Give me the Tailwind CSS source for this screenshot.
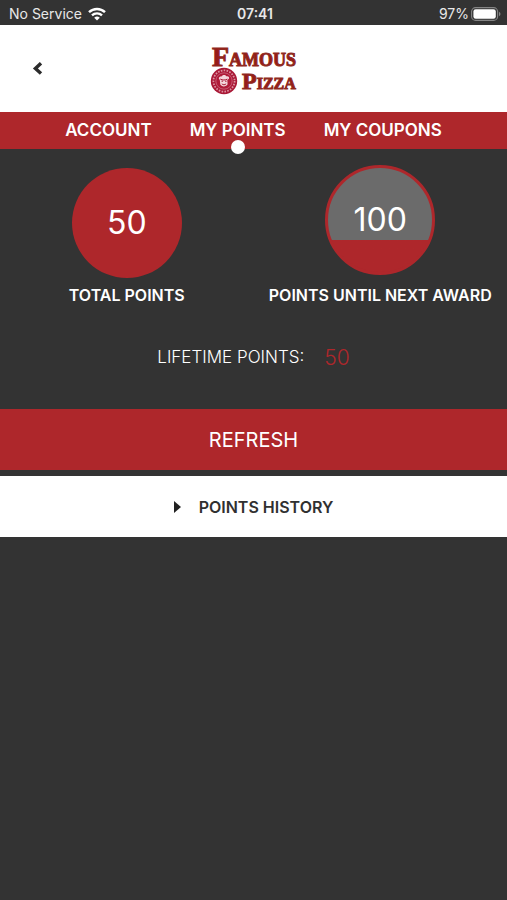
<!DOCTYPE html>
<html lang="en">
<head>
<meta charset="utf-8">
<meta name="viewport" content="width=device-width, initial-scale=1">
<title>Famous Pizza - My Points</title>
<script src="https://cdn.jsdelivr.net/npm/@tailwindcss/browser@4"></script>
</head>
<body class="min-h-screen bg-[#333333] font-['Inter',sans-serif] text-white">
<div class="grid h-[25px] grid-cols-3 items-center pt-[2px] pr-[6px] pl-[9px] text-[14px] text-[#e8e8e8]">
  <div class="flex items-center gap-[6px]">
    <span>No Service</span>
    <svg class="h-[14px] w-[18px]" viewBox="0 0 18 14" fill="none" stroke="#fff" stroke-width="2.4" aria-label="Wi-Fi" role="img">
      <path d="M1 5.2a11.5 11.5 0 0 1 16 0M4 8.4a7.2 7.2 0 0 1 10 0"/>
      <path d="M9 13.6 6.2 10.8a4 4 0 0 1 5.6 0Z" fill="#fff" stroke="none"/>
    </svg>
  </div>
  <time class="text-center font-semibold">07:41</time>
  <div class="flex items-center justify-end gap-[2px]">
    <span>97%</span>
    <svg class="h-[14px] w-[30px]" viewBox="0 0 30 14" aria-label="Battery" role="img">
      <rect x=".6" y=".6" width="26" height="12.8" rx="4" fill="none" stroke="#858585" stroke-width="1.1"/>
      <rect x="2.4" y="2.3" width="22.4" height="9.4" rx="2.3" fill="#fff"/>
      <path d="M28 4.8c2 .8 2 3.6 0 4.4Z" fill="#858585"/>
    </svg>
  </div>
</div>

<header class="grid h-[87px] grid-cols-3 items-center bg-white px-[24px]">
  <button type="button" aria-label="Back" class="flex size-[28px] items-center justify-center">
    <svg class="size-[14px]" viewBox="0 0 14 14" fill="none" stroke="#2b2b2b" stroke-width="3.4"><path d="M10 1.2 4.4 6.4l5.6 5.2"/></svg>
  </button>
  <svg class="h-[56px] w-[88px] justify-self-center" viewBox="0 0 88 56" role="img" aria-label="Famous Pizza" font-family="Liberation Serif, serif" font-weight="700" fill="#981b18" stroke="#8f2a20" stroke-width="1">
    <text x="2" y="25" font-size="28">F<tspan font-size="18">AMOUS</tspan></text>
    <text x="32" y="48" font-size="24">P<tspan font-size="16">IZZA</tspan></text>
    <g stroke="none">
      <circle cx="14" cy="40" r="13.2" fill="#a91836"/>
      <circle cx="14" cy="40" r="10.6" fill="none" stroke="#dc93a2" stroke-width="1.8" stroke-dasharray="1.6 1.3"/>
      <circle cx="14" cy="40" r="8.2" fill="#b01b39" stroke="#d9859a" stroke-width=".6"/>
      <path d="M8.8 37.4c.2-2 2-2.2 2.7-1.8 1-2 4-2 4.8-.3 2-.6 3.4.7 2.6 2.4l-1.6 1.2.3 4.4c-1.4 2.6-5.8 2.9-7.3.3l-.5-4.5Z" fill="#f4d6dc"/>
      <path d="M10.3 38.1c2.2 1.2 5 1.2 7.1 0M11.5 40.2h1.6M15 40.2h1.6M11.8 42.8c1.3 1.3 3 1.3 4.3 0" fill="none" stroke="#a91836" stroke-width="1"/>
    </g>
  </svg>
</header>

<nav class="flex h-[37px] items-center justify-center gap-[38px] bg-[#ae272b] text-[17px] font-semibold">
  <a href="#account">ACCOUNT</a>
  <a href="#points" aria-current="page" class="relative flex h-full items-center">MY POINTS<span class="absolute -bottom-[5px] left-1/2 size-[14px] -translate-x-1/2 rounded-full bg-white"></span></a>
  <a href="#coupons">MY COUPONS</a>
</nav>

<main>
  <div class="grid h-[158px] grid-cols-2 text-[16px] font-semibold whitespace-nowrap">
    <section class="flex flex-col items-center justify-between pt-[19px]">
      <div class="flex size-[110px] items-center justify-center rounded-full bg-[#ae272b] text-[32px] font-normal">50</div>
      <h2>TOTAL POINTS</h2>
    </section>
    <section class="flex flex-col items-center justify-between pt-4">
      <div class="flex size-[110px] items-center justify-center rounded-full border-[3px] border-[#ae272b] bg-linear-to-b from-[#6b6b6b] from-69% to-[#ae272b] to-69% text-[32px] font-normal">100</div>
      <h2>POINTS UNTIL NEXT AWARD</h2>
    </section>
  </div>
  <p class="flex h-[102px] items-center justify-center gap-[20px] text-[17px] font-light"><span>LIFETIME POINTS:</span><span class="text-[21px] text-[#ae272b]">50</span></p>
  <button type="button" class="h-[61px] w-full bg-[#ae272b] text-[20px] font-normal">REFRESH</button>
  <button type="button" aria-expanded="false" class="mt-[6px] flex h-[61px] w-full items-center justify-center gap-[18px] bg-white text-[16px] font-semibold text-[#303030]">
    <svg class="h-[12px] w-[7px]" viewBox="0 0 7 12" fill="#222"><path d="M0 0 7 6 0 12Z"/></svg>
    POINTS HISTORY
  </button>
</main>
</body>
</html>
